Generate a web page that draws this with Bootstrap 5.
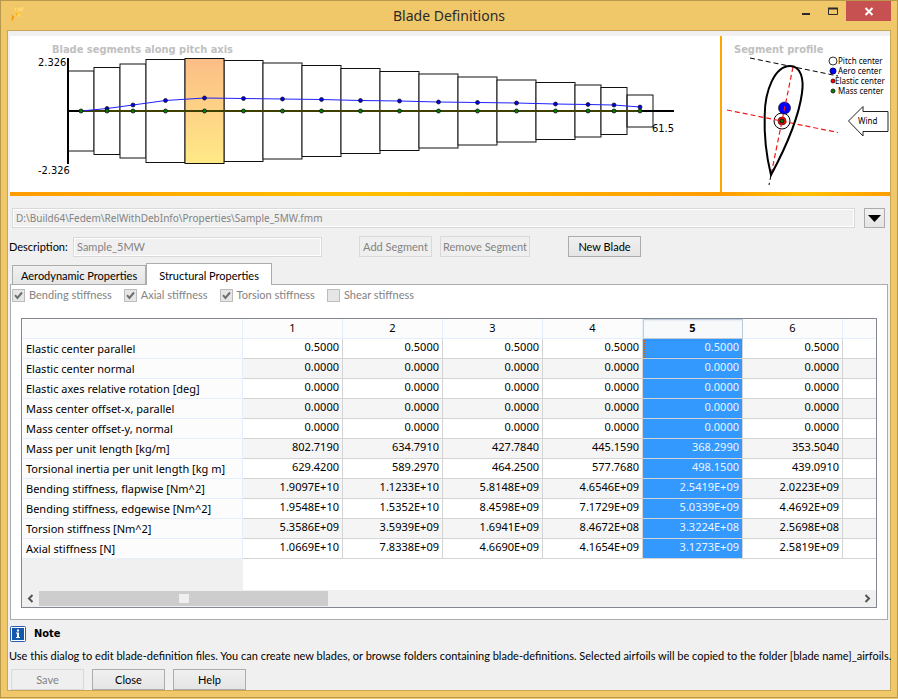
<!DOCTYPE html>
<html lang="en">
<head>
<meta charset="utf-8">
<meta name="viewport" content="width=device-width, initial-scale=1">
<title>Blade Definitions</title>
<link href="https://cdn.jsdelivr.net/npm/bootstrap@5.3.0/dist/css/bootstrap.min.css" rel="stylesheet">
<style>
body { font-family: "Lato", "Noto Sans", sans-serif; font-size: 11px; line-height: 16px; color: #000; background: #f0c869; }
.dialog-frame { background: #f0c869; border: 1px solid #b8984c; padding: 0 6px 6px; }
.titlebar { height: 29px; font: 14px/30px "Noto Sans", sans-serif; color: #2b2b2b; }
.title-side { width: 126px; }
.title-side svg { display: block; }
.win-btn { border: 0; padding: 0; background: none; height: 20px; width: 27px; line-height: 0; }
.win-close { width: 45px; background: #c75050; }
.client { background: #f0f0f0; border: 1px solid #c9a655; padding: 5px 0 0 2px; }
.plot-pane { background: #fff; }
.plot-pane svg { display: block; height: 156px; }
.plot-pane::after { content: ""; display: block; height: 4px; background: linear-gradient(90deg, #ff9c00, #ffc000 50%, #ff9c00); }
.pane-profile { width: 170px; }
.pane-profile svg { width: 170px; border-left: 2px solid #ffa500; }
svg text { font-family: "DejaVu Sans Condensed", "DejaVu Sans", sans-serif; font-size: 11px; }
svg .plot-title { font-weight: 700; fill: #c0c0c0; }
svg .legend-text { font-family: "Noto Sans", sans-serif; font-size: 8px; }
.field { font-size: 11px; line-height: 16px; height: 20px; padding: 0 3px; border: 1px solid #d9d9d9; border-radius: 0; color: #838383; background: #f0f0f0; box-shadow: inset 0 0 0 1px #fff; }
.field:disabled { background: #f0f0f0; opacity: 1; }
.field-path { font-family: "Noto Sans", sans-serif; font-size: 10px; }
.field-desc { width: 249px; }
.flush-left { margin-left: -1px; }
.label-desc { width: 64px; }
.path-row { padding: 12px 5px 0 2px; gap: 9px; }
.desc-row { padding: 8px 0 0; }
.push { font-size: 11px; line-height: 17px; padding: 1px 0; width: 73px; height: 21px; border: 1px solid #acacac; border-radius: 0; color: #000; background: linear-gradient(#f0f0f0, #e5e5e5); white-space: nowrap; }
.push:disabled { color: #838383; background: #efefef; border-color: #d9d9d9; opacity: 1; }
.push-drop { width: 21px; height: 20px; line-height: 0; }
.push-remove { width: 90px; }
.gap-add { margin-left: 37px; }
.gap-remove { margin-left: 8px; }
.gap-new { margin-left: 38px; }
.tabset { padding: 6px 2px 0 0; }
.nav-tabs { border: 0; padding-left: 2px; }
.nav-tabs .nav-link { font-size: 11px; line-height: 17px; padding: 1px 8px 0; border: 1px solid #acacac; border-bottom: 0; border-radius: 0; margin: 0; color: #000; background: linear-gradient(#f0f0f0, #e5e5e5); height: 19px; }
.nav-tabs .nav-link.active { background: #fff; height: 22px; padding: 2px 12px 0; margin: 0 0 -1px; color: #000; border-color: #acacac; }
.tab-face { background: #fff; border: 1px solid #acacac; padding: 0 10px 11px; }
.checks { margin-left: -9px; gap: 12px; height: 20px; color: #838383; }
.tick { width: 13px; height: 13px; border: 1px solid #bcbcbc; background: #e6e6e6 center/11px no-repeat; appearance: none; margin: 0 4px 0 0; }
.tick:checked { background-image: url("data:image/svg+xml,%3Csvg xmlns='http://www.w3.org/2000/svg' viewBox='0 0 11 11'%3E%3Cpath d='M2 5.2 4.4 8 9 2.5' fill='none' stroke='%23707070' stroke-width='2'/%3E%3C/svg%3E"); }
.grid-box { border: 1px solid #828790; margin-top: 13px; background: #fff; overflow: hidden; }
.grid-view { overflow: hidden; height: 271px; background: linear-gradient(90deg, #f0f0f0 221px, #fff 221px); }
.grid-table { table-layout: fixed; width: 921px; margin: 0; border-collapse: separate; border-spacing: 0; font: 11px/16px "Noto Sans", sans-serif; }
.grid-table th, .grid-table td { height: 20px; padding: 0 3px 3px; text-align: right; border: solid #d4d4d4; border-width: 0 1px 1px 0; overflow: hidden; white-space: nowrap; }
.grid-table th { font-weight: 400; padding: 2px 4px 1px; border-color: #e4eefc; background: #fcfcfc; }
.grid-table thead th { text-align: center; padding: 1px 0 2px; }
.grid-table tbody th { text-align: left; }
.grid-table tbody tr td { background: #fff; color: #000; }
.grid-table tbody tr:nth-child(even) td { background: #f5f5f5; }
.grid-table tbody tr td:nth-child(6), .grid-table tbody tr:nth-child(even) td:nth-child(6) { background: #3399ff; color: #eaf4ff; }
.grid-table thead th.picked { font-weight: 700; border-color: #bccbdb; background: linear-gradient(#dfe6ee, #f7f9fb 3px); box-shadow: inset 1px 1px #c0cfe0; }
.grid-table tbody tr td.focus-cell { outline: 1px dotted #c06818; outline-offset: -2px; }
.hscroll { height: 17px; background: #f0f0f0; }
.hscroll button { width: 17px; height: 17px; border: 0; padding: 0; background: #f0f0f0; line-height: 0; }
.thumb { width: 289px; height: 15px; background: #cdcdcd; }
.grip { width: 10px; height: 9px; background: #efefef; }
.note { padding: 6px 0 0; }
.note-title { font: 700 11px/16px "DejaVu Sans Condensed", "DejaVu Sans", sans-serif; }
.note-text { line-height: 16px; padding-top: 6px; white-space: nowrap; }
.actions { padding: 5px 0 0 1px; gap: 8px; }
</style>
<script src="https://cdn.jsdelivr.net/npm/bootstrap@5.3.0/dist/js/bootstrap.bundle.min.js"></script>
</head>
<body>
<main class="dialog-frame">
  <header class="titlebar d-flex">
    <div class="title-side">
      <svg width="24" height="28" viewBox="0 0 24 28" aria-hidden="true">
        <g stroke="#f9d77a" stroke-width=".5">
          <path d="M6 7l3-1 2 1.500-1 2.500-3-.5-1-1z" fill="#fbb92d"/>
          <path d="M10.500 7.500l3-1 3 0-.5 2.500-3 1.500-2-1z" fill="#ffd76e"/>
          <path d="M7.500 10l2 1.500h2l3-1-.5 3-2.500 2.500-3-1z" fill="#fdb71c"/>
          <path d="M4 14l1.500-.5 1 1.500 1.500 1-1.500 2.500-1.500 3-1-3 .500-2z" fill="#f59a13"/>
          <circle cx="12" cy="14" r="1.500" fill="#ffd76e"/><circle cx="8.500" cy="8" r="1" fill="#ffe59a"/>
        </g>
      </svg>
    </div>
    <div class="flex-grow-1 text-center">Blade Definitions</div>
    <div class="title-side d-flex justify-content-end pe-0">
      <button class="win-btn" type="button" aria-label="Minimize"><svg width="27" height="20"><path d="M10 13h8" stroke="#2b2b2b" stroke-width="2"/></svg></button>
      <button class="win-btn" type="button" aria-label="Maximize"><svg width="27" height="20"><path d="M9.500 7v6.500h9v-6.500" fill="none" stroke="#2b2b2b"/><path d="M9 7.500h10" stroke="#2b2b2b" stroke-width="2"/></svg></button>
      <button class="win-btn win-close" type="button" aria-label="Close window"><svg width="45" height="20"><path d="M19.500 7l7 7m0-7l-7 7" stroke="#fff" stroke-width="2"/></svg></button>
    </div>
  </header>

  <div class="client">
    <section class="d-flex">
      <div class="plot-pane flex-grow-1">
        <svg width="100%" viewBox="10 36 710 156" preserveAspectRatio="xMinYMin meet" role="img" aria-label="Blade segments along pitch axis">
          <defs><linearGradient id="sel" x1="0" y1="0" x2="0" y2="1"><stop offset="0" stop-color="#fcbd86"/><stop offset="1" stop-color="#ffe986"/></linearGradient></defs>
          <text class="plot-title" x="52" y="53">Blade segments along pitch axis</text>
          <text x="38" y="66">2.326</text><text x="38" y="174">-2.326</text><text x="652" y="132">61.5</text>
          <g fill="#fff" stroke="#111">
            <rect x="68" y="71" width="26" height="80"/><rect x="94" y="67.500" width="26" height="87"/><rect x="120" y="64" width="26" height="94"/><rect x="146" y="59.500" width="39" height="103"/>
            <rect x="224" y="60.500" width="39" height="101"/><rect x="263" y="63" width="39" height="96"/><rect x="302" y="65.500" width="39" height="91"/><rect x="341" y="68.500" width="39" height="85"/><rect x="380" y="71.500" width="39" height="79"/><rect x="419" y="74" width="39" height="74"/><rect x="458" y="77" width="39" height="68"/><rect x="497" y="80" width="39" height="62"/><rect x="536" y="82.500" width="39" height="57"/><rect x="575" y="85" width="26" height="52"/><rect x="601" y="87.500" width="26" height="47"/><rect x="627" y="95" width="26" height="32" fill="none"/>
            <rect x="185" y="58.500" width="39" height="105" fill="url(#sel)"/>
          </g>
          <path d="M68 58v106M68 111h606" stroke="#000" stroke-width="2"/>
          <path d="M81 111h559" stroke="#3f3f00" stroke-width="2"/>
          <path d="M81 111L107 108.500 133 105 165.500 100.500 204.500 98 243.500 98.500 282.500 99 321.500 99.500 360.500 100.500 399.500 101 438.500 102 477.500 102.500 516.500 103 555.500 104 588 104.500 614 105 640 107" fill="none" stroke="#2020ff"/>
          <g fill="#0000e0" stroke="#111" stroke-width=".7"><circle cx="107" cy="108.500" r="2"/><circle cx="133" cy="105" r="2"/><circle cx="165.500" cy="100.500" r="2"/><circle cx="204.500" cy="98" r="2"/><circle cx="243.500" cy="98.500" r="2"/><circle cx="282.500" cy="99" r="2"/><circle cx="321.500" cy="99.500" r="2"/><circle cx="360.500" cy="100.500" r="2"/><circle cx="399.500" cy="101" r="2"/><circle cx="438.500" cy="102" r="2"/><circle cx="477.500" cy="102.500" r="2"/><circle cx="516.500" cy="103" r="2"/><circle cx="555.500" cy="104" r="2"/><circle cx="588" cy="104.500" r="2"/><circle cx="614" cy="105" r="2"/><circle cx="640" cy="107" r="2"/></g>
          <g fill="#008000" stroke="#111" stroke-width=".8"><circle cx="81" cy="111" r="2"/><circle cx="107" cy="111" r="2"/><circle cx="133" cy="111" r="2"/><circle cx="165.500" cy="111" r="2"/><circle cx="204.500" cy="111" r="2"/><circle cx="243.500" cy="111" r="2"/><circle cx="282.500" cy="111" r="2"/><circle cx="321.500" cy="111" r="2"/><circle cx="360.500" cy="111" r="2"/><circle cx="399.500" cy="111" r="2"/><circle cx="438.500" cy="111" r="2"/><circle cx="477.500" cy="111" r="2"/><circle cx="516.500" cy="111" r="2"/><circle cx="555.500" cy="111" r="2"/><circle cx="588" cy="111" r="2"/><circle cx="614" cy="111" r="2"/><circle cx="640" cy="111" r="2"/></g>
        </svg>
      </div>
      <div class="plot-pane pane-profile flex-shrink-0">
        <svg viewBox="722 36 168 156" preserveAspectRatio="xMinYMin meet" role="img" aria-label="Segment profile">
          <text class="plot-title" x="734" y="53">Segment profile</text>
          <path d="M750 58L838 76M771 175l-2 10" stroke="#000" stroke-dasharray="5 3" fill="none"/>
          <circle cx="782" cy="121" r="8" fill="#fff" stroke="#000"/>
          <circle cx="784.500" cy="108" r="6" fill="#0000ff" stroke="#000" stroke-width=".6"/>
          <circle cx="782" cy="121" r="4" fill="#f01010" stroke="#400" stroke-width=".7"/>
          <path d="M727 110L838 132.500M793 67L771 175" stroke="#f01818" stroke-dasharray="5 3" stroke-width="1.200" fill="none"/>
          <circle cx="782" cy="121" r="2" fill="#008000" stroke="#000" stroke-width=".8"/>
          <path d="M771 175C766 155 764 136 764.700 115C765 90 775 66 790 66C801 66 804 79 802 93C799 115 786 147 771 175Z" fill="none" stroke="#000" stroke-width="2"/>
          <circle cx="833" cy="61" r="4" fill="#fff" stroke="#333"/><circle cx="833" cy="71" r="3" fill="#00f" stroke="#006"/><circle cx="833" cy="81" r="2" fill="#f00" stroke="#300" stroke-width=".8"/><circle cx="833" cy="91" r="2" fill="#008000" stroke="#111" stroke-width=".8"/>
          <text class="legend-text" x="838" y="64">Pitch center</text><text class="legend-text" x="838" y="74">Aero center</text><text class="legend-text" x="835" y="84">Elastic center</text><text class="legend-text" x="838" y="94">Mass center</text>
          <path d="M848.500 121L863 106.500V111.500H888V131.500H863V136Z" fill="#fff" stroke="#222"/>
          <text class="legend-text" x="858" y="124">Wind</text>
        </svg>
      </div>
    </section>

    <form>
      <div class="path-row d-flex">
        <input class="form-control field field-path flex-grow-1 w-auto" type="text" aria-label="Blade file" value="D:\Build64\Fedem\RelWithDebInfo\Properties\Sample_5MW.fmm" disabled>
        <button class="btn push push-drop" type="button" aria-label="Choose file"><svg width="15" height="14"><path d="M1 4h13l-6.500 7z"/></svg></button>
      </div>
      <div class="desc-row d-flex align-items-center">
        <label class="label-desc flush-left" for="desc">Description:</label>
        <input class="form-control field field-desc" id="desc" type="text" value="Sample_5MW" disabled>
        <button class="btn push gap-add" type="button" disabled>Add Segment</button>
        <button class="btn push push-remove gap-remove" type="button" disabled>Remove Segment</button>
        <button class="btn push gap-new" type="button">New Blade</button>
      </div>

      <div class="tabset">
        <ul class="nav nav-tabs align-items-end" role="tablist">
          <li class="nav-item" role="presentation"><button class="nav-link" type="button" role="tab" aria-selected="false">Aerodynamic Properties</button></li>
          <li class="nav-item" role="presentation"><button class="nav-link active" type="button" role="tab" aria-selected="true">Structural Properties</button></li>
        </ul>
        <div class="tab-face" role="tabpanel">
          <div class="checks d-flex align-items-center">
            <div class="d-flex align-items-center"><input class="tick" type="checkbox" id="c1" checked disabled><label for="c1">Bending stiffness</label></div>
            <div class="d-flex align-items-center"><input class="tick" type="checkbox" id="c2" checked disabled><label for="c2">Axial stiffness</label></div>
            <div class="d-flex align-items-center"><input class="tick" type="checkbox" id="c3" checked disabled><label for="c3">Torsion stiffness</label></div>
            <div class="d-flex align-items-center"><input class="tick" type="checkbox" id="c4" disabled><label for="c4">Shear stiffness</label></div>
          </div>
          <div class="grid-box">
            <div class="grid-view">
              <table class="grid-table">
                <colgroup><col style="width:221px"><col><col><col><col><col><col><col></colgroup>
                <thead><tr><th></th><th scope="col">1</th><th scope="col">2</th><th scope="col">3</th><th scope="col">4</th><th scope="col" class="picked">5</th><th scope="col">6</th><th></th></tr></thead>
                <tbody>
                  <tr><th scope="row">Elastic center parallel</th><td>0.5000</td><td>0.5000</td><td>0.5000</td><td>0.5000</td><td class="focus-cell">0.5000</td><td>0.5000</td><td></td></tr>
                  <tr><th scope="row">Elastic center normal</th><td>0.0000</td><td>0.0000</td><td>0.0000</td><td>0.0000</td><td>0.0000</td><td>0.0000</td><td></td></tr>
                  <tr><th scope="row">Elastic axes relative rotation [deg]</th><td>0.0000</td><td>0.0000</td><td>0.0000</td><td>0.0000</td><td>0.0000</td><td>0.0000</td><td></td></tr>
                  <tr><th scope="row">Mass center offset-x, parallel</th><td>0.0000</td><td>0.0000</td><td>0.0000</td><td>0.0000</td><td>0.0000</td><td>0.0000</td><td></td></tr>
                  <tr><th scope="row">Mass center offset-y, normal</th><td>0.0000</td><td>0.0000</td><td>0.0000</td><td>0.0000</td><td>0.0000</td><td>0.0000</td><td></td></tr>
                  <tr><th scope="row">Mass per unit length [kg/m]</th><td>802.7190</td><td>634.7910</td><td>427.7840</td><td>445.1590</td><td>368.2990</td><td>353.5040</td><td></td></tr>
                  <tr><th scope="row">Torsional inertia per unit length [kg m]</th><td>629.4200</td><td>589.2970</td><td>464.2500</td><td>577.7680</td><td>498.1500</td><td>439.0910</td><td></td></tr>
                  <tr><th scope="row">Bending stiffness, flapwise [Nm^2]</th><td>1.9097E+10</td><td>1.1233E+10</td><td>5.8148E+09</td><td>4.6546E+09</td><td>2.5419E+09</td><td>2.0223E+09</td><td></td></tr>
                  <tr><th scope="row">Bending stiffness, edgewise [Nm^2]</th><td>1.9548E+10</td><td>1.5352E+10</td><td>8.4598E+09</td><td>7.1729E+09</td><td>5.0339E+09</td><td>4.4692E+09</td><td></td></tr>
                  <tr><th scope="row">Torsion stiffness [Nm^2]</th><td>5.3586E+09</td><td>3.5939E+09</td><td>1.6941E+09</td><td>8.4672E+08</td><td>3.3224E+08</td><td>2.5698E+08</td><td></td></tr>
                  <tr><th scope="row">Axial stiffness [N]</th><td>1.0669E+10</td><td>7.8338E+09</td><td>4.6690E+09</td><td>4.1654E+09</td><td>3.1273E+09</td><td>2.5819E+09</td><td></td></tr>
                </tbody>
              </table>
            </div>
            <div class="hscroll d-flex align-items-center">
              <button type="button" aria-label="Scroll left"><svg width="17" height="17"><path d="M10.500 5L7 8.500l3.500 3.500" fill="none" stroke="#555" stroke-width="2"/></svg></button>
              <div class="thumb d-flex align-items-center justify-content-center"><div class="grip"></div></div>
              <button class="ms-auto" type="button" aria-label="Scroll right"><svg width="17" height="17"><path d="M6.500 5L10 8.500 6.500 12" fill="none" stroke="#555" stroke-width="2"/></svg></button>
            </div>
          </div>
        </div>
      </div>

      <div class="note">
        <div class="d-flex align-items-center gap-2">
          <svg width="16" height="16" viewBox="0 0 16 16" aria-hidden="true"><rect x=".5" y=".5" width="15" height="15" rx="1" fill="#fff" stroke="#2a5db0"/><rect x="2" y="2" width="12" height="12" fill="#1458ae"/><path d="M7 3.500h2v2H7zM6 6.500h3v4.500h1V12H6v-1h1V7.500H6z" fill="#fff"/></svg>
          <span class="note-title">Note</span>
        </div>
        <div class="note-text flush-left">Use this dialog to edit blade-definition files. You can create new blades, or browse folders containing blade-definitions. Selected airfoils will be copied to the folder [blade name]_airfoils.</div>
      </div>
      <div class="actions d-flex">
        <button class="btn push" type="button" disabled>Save</button>
        <button class="btn push" type="button">Close</button>
        <button class="btn push" type="button">Help</button>
      </div>
    </form>
  </div>
</main>
</body>
</html>
